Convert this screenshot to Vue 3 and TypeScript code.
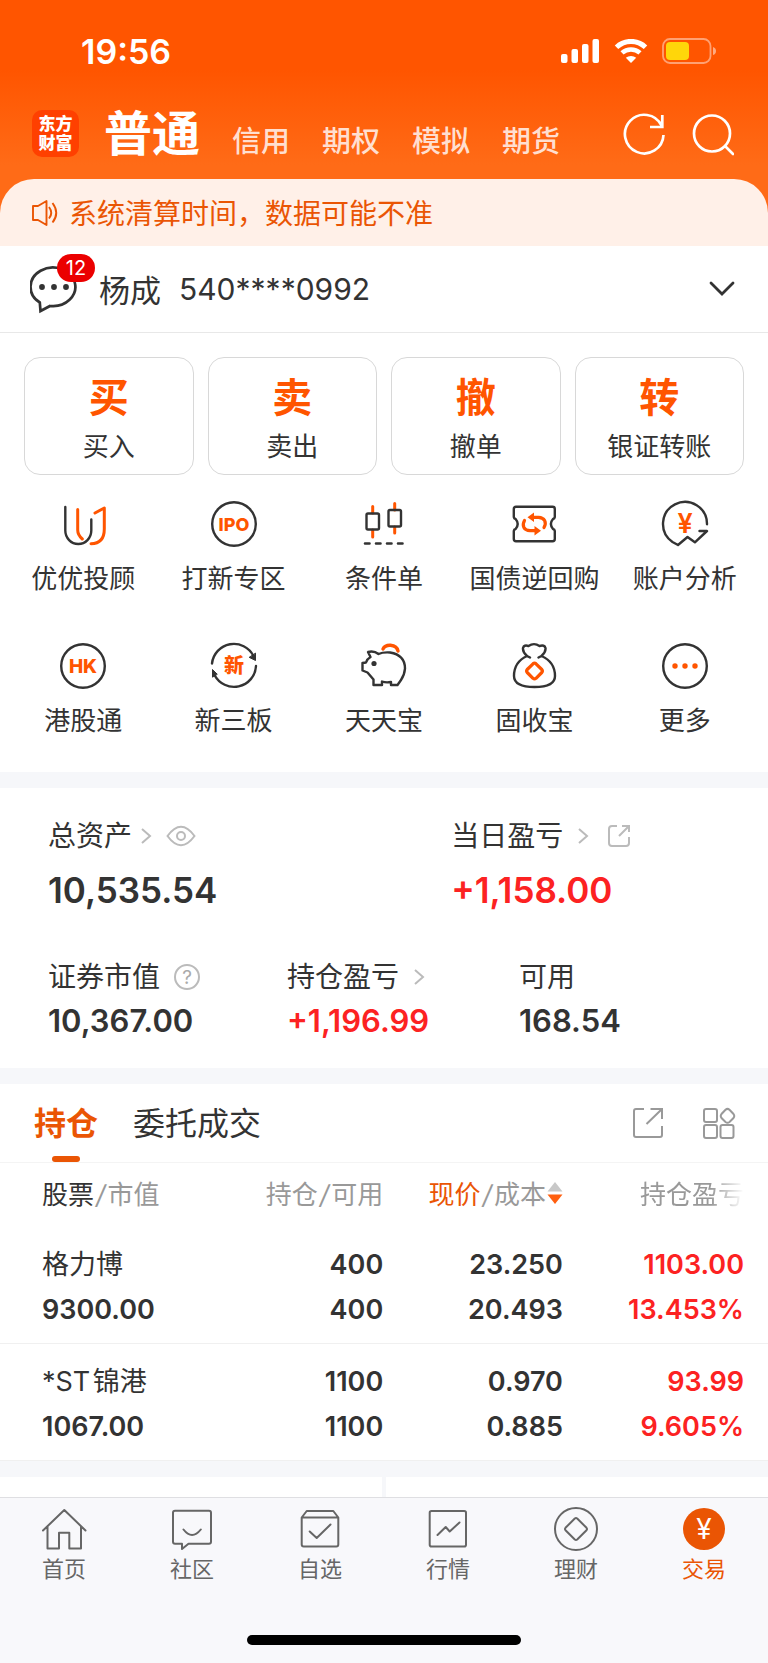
<script setup lang="ts">
interface Action { mark: string; label: string }
interface Holding {
  name: string
  value: string
  held: string
  usable: string
  price: string
  cost: string
  profit: string
  rate: string
}

const markets: string[] = ['信用', '期权', '模拟', '期货']

const actions: Action[] = [
  { mark: '买', label: '买入' },
  { mark: '卖', label: '卖出' },
  { mark: '撤', label: '撤单' },
  { mark: '转', label: '银证转账' },
]

const services: string[] = [
  '优优投顾', '打新专区', '条件单', '国债逆回购', '账户分析',
  '港股通', '新三板', '天天宝', '固收宝', '更多',
]

const holdings: Holding[] = [
  { name: '格力博', value: '9300.00', held: '400', usable: '400', price: '23.250', cost: '20.493', profit: '1103.00', rate: '13.453%' },
  { name: '*ST\u200A锦港', value: '1067.00', held: '1100', usable: '1100', price: '0.970', cost: '0.885', profit: '93.99', rate: '9.605%' },
]

const navItems: string[] = ['首页', '社区', '自选', '行情', '理财', '交易']
</script>

<template>
  <div class="page">
    <header class="top">
      <div class="status">
        <span class="clock">19:56</span>
        <div class="status-icons">
          <svg width="39" height="24" viewBox="0 0 39 24" fill="#fff">
            <rect x="0" y="15" width="6.5" height="9" rx="2" />
            <rect x="10.5" y="10" width="6.5" height="14" rx="2" />
            <rect x="21" y="5" width="6.5" height="19" rx="2" />
            <rect x="31.5" y="0" width="6.5" height="24" rx="2" />
          </svg>
          <svg width="34" height="24" viewBox="0 0 34 24" fill="none" stroke="#fff">
            <path d="M2.5 8.2A21 21 0 0 1 31.500 8.200" stroke-width="5" />
            <path d="M8 13.900A13.500 13.500 0 0 1 26 13.900" stroke-width="4.600" />
            <path d="M17 24L11.800 18.800A8 8 0 0 1 22.200 18.800Z" fill="#fff" stroke="none" />
          </svg>
          <svg width="55" height="26" viewBox="0 0 55 26" fill="none">
            <rect x="1" y="1" width="47.500" height="24" rx="7" stroke="#fff" stroke-opacity=".45" stroke-width="1.800" />
            <rect x="4" y="4" width="23" height="18" rx="4" fill="#ffd60a" />
            <path d="M51 9q3 1 3 4t-3 4z" fill="#fff" fill-opacity=".5" />
          </svg>
        </div>
      </div>
      <div class="title-bar">
        <div class="logo"><span>东方</span><span>财富</span></div>
        <nav class="markets">
          <a href="#" class="current">普通</a>
          <a v-for="m in markets" :key="m" href="#">{{ m }}</a>
        </nav>
        <div class="tools">
          <button type="button" aria-label="刷新">
            <svg width="44" height="44" viewBox="0 0 44 44" fill="none" stroke="#fff" stroke-width="2.700">
              <path d="M41.500 23A19.300 19.300 0 1 1 39.500 13.500M40.300 3V15H28" />
            </svg>
          </button>
          <button type="button" aria-label="搜索">
            <svg width="44" height="44" viewBox="0 0 44 44" fill="none" stroke="#fff" stroke-width="2.700" stroke-linecap="round">
              <circle cx="22" cy="21.500" r="18" /><path d="M35.500 34.500L43 42" />
            </svg>
          </button>
        </div>
      </div>
    </header>

    <div class="notice">
      <svg width="28" height="28" viewBox="0 0 28 28" fill="none" stroke="#ea5504" stroke-width="1.900" stroke-linejoin="round">
        <path d="M2 7H7L15.500 2V26L7 21H2ZM18 8Q22.500 14 18 19.500M21.500 4Q29 14 21.500 23.500" />
      </svg>
      <span>系统清算时间，数据可能不准</span>
    </div>

    <button type="button" class="account">
      <span class="message">
        <svg width="50" height="50" viewBox="0 0 50 50">
          <path d="M9.800 38.500A22.400 19.300 0 1 1 20 42L10.500 47Z" fill="none" stroke="#333" stroke-width="2.700" />
          <g fill="#333"><circle cx="12" cy="23" r="2.900" /><circle cx="24" cy="23" r="2.900" /><circle cx="36" cy="23" r="2.900" /></g>
        </svg>
        <span class="badge">12</span>
      </span>
      <span class="owner">杨成</span>
      <span class="number">540****0992</span>
      <svg class="chevron" width="26" height="16" viewBox="0 0 26 16" fill="none" stroke="#333" stroke-width="2.800" stroke-linecap="round">
        <path d="M2 2L13 13L24 2" />
      </svg>
    </button>

    <section class="actions">
      <button v-for="a in actions" :key="a.label" type="button">
        <strong>{{ a.mark }}</strong>
        <span>{{ a.label }}</span>
      </button>
    </section>

    <section class="services">
      <a v-for="(s, i) in services" :key="s" href="#">
        <svg width="48" height="48" viewBox="0 0 48 48" fill="none" stroke="#333" stroke-width="2.400" stroke-linecap="round" stroke-linejoin="round">
          <template v-if="i === 0">
            <path d="M6.300 7V30.500A13 13.500 0 0 0 32.300 30.500V19.500" />
            <path class="accent" d="M18.700 9.500V30Q18.700 35 23.300 39M36 13L45.300 8V29Q45.300 43.500 32 43.800" stroke-width="3" />
          </template>
          <template v-else-if="i === 1">
            <circle cx="24" cy="24" r="21.800" />
            <text x="24" y="30.500" font-size="18">IPO</text>
          </template>
          <template v-else-if="i === 2">
            <path class="accent" d="M12.700 6.500V13M12.700 30V37M34.700 3.500V10M34.700 27V33" stroke-width="3" />
            <rect x="6.500" y="13.500" width="12.500" height="16" rx="1.500" />
            <rect x="28.500" y="10" width="12.500" height="16.500" rx="1.500" />
            <path d="M5 43.500H9.500M16 43.500H20.500M27 43.500H31.500M38 43.500H42.500" stroke-width="2.600" />
          </template>
          <template v-else-if="i === 3">
            <path d="M6 6.800H42.500Q44.800 6.800 44.800 9V17Q44.600 18.600 43 19Q38.800 24 43 29Q44.600 29.400 44.800 31V39Q44.800 41.200 42.500 41.200H6Q3.800 41.200 3.800 39V31Q4 29.400 5.600 29Q9.800 24 5.600 19Q4 18.600 3.800 17V9Q3.800 6.800 6 6.800Z" />
            <path class="accent" d="M34 27.500C37 22 34.500 17.600 28.500 17.300H23M14.500 20.500C11.500 26 14 30.400 20 30.700H26" stroke-width="3.200" />
            <path d="M17.500 17.300L24 12.500V22ZM31 30.700L24.500 26V35.500Z" fill="#ff5500" stroke="none" />
          </template>
          <template v-else-if="i === 4">
            <path d="M46 24.300A22 22 0 1 0 11.500 42L17 45L26.500 37L33.900 42.300L46 31H38.500" />
            <text x="24" y="32.500" font-size="27" class="yen">¥</text>
          </template>
          <template v-else-if="i === 5">
            <circle cx="24" cy="24" r="21.800" />
            <text x="24" y="30.500" font-size="19">HK</text>
          </template>
          <template v-else-if="i === 6">
            <path d="M2 21.500A22 22 0 0 1 43.500 14M46 24A22 22 0 0 1 4.500 33" />
            <path d="M45.500 11.500V18.500L39.500 15.500ZM2.500 34.800V27.500L7 32Z" fill="#333" stroke-width="1" />
            <text x="24" y="31" font-size="20">新</text>
          </template>
          <template v-else-if="i === 7">
            <path d="M8 10Q14 8.500 18.500 12Q23 10 30 10.500Q45 13 45 26.500Q44.500 33 41 38L37.500 43H31V40Q26 41 22 39.500V43H13.500V37.500L7.500 30.500L2.500 28.500V21L6 20.500Q7 17 10.500 15Z" />
            <circle cx="14" cy="21.500" r="2.600" fill="#333" stroke="none" />
            <path class="accent" d="M23 7Q25 3 30.500 3.300Q37 4 38 9" stroke-width="3.400" />
          </template>
          <template v-else-if="i === 8">
            <path d="M17 14Q12.500 10 13 6Q14 2.500 18.500 4Q24 .2 29.500 4Q34.500 2.500 35.500 6Q36 10 31.500 14Q45 20 45 34Q45 45 24.500 45Q4 45 4 34Q4 20 17 14M28.500 15.500L31.500 14M20 15.500L17 14" />
            <path class="accent" d="M23 21.800Q24.500 20.500 26 21.800L31.800 27.500Q33 29 31.800 30.500L26 36.300Q24.500 37.500 23 36.300L17.200 30.500Q16 29 17.200 27.500Z" stroke-width="3.200" />
          </template>
          <template v-else>
            <circle cx="24" cy="24" r="21.800" />
            <g fill="#ff5500" stroke="none"><circle cx="14" cy="24" r="2.700" /><circle cx="24" cy="24" r="2.700" /><circle cx="34" cy="24" r="2.700" /></g>
          </template>
        </svg>
        <span>{{ s }}</span>
      </a>
    </section>

    <section class="assets">
      <div class="asset-row main">
        <div>
          <h2>总资产
            <svg class="gt" width="12" height="18" viewBox="0 0 12 18"><path d="M2 2L10 9L2 16" /></svg>
            <svg class="mini" width="30" height="22" viewBox="0 0 30 22"><path d="M1.500 11Q15-7.500 28.500 11Q15 29.500 1.500 11Z" /><circle cx="15" cy="11" r="4" /></svg>
          </h2>
          <p>10,535.54</p>
        </div>
        <div>
          <h2>当日盈亏
            <svg class="gt far" width="12" height="18" viewBox="0 0 12 18"><path d="M2 2L10 9L2 16" /></svg>
            <svg class="mini wide" width="24" height="24" viewBox="0 0 24 24"><path d="M10 2H5Q2 2 2 5V19Q2 22 5 22H19Q22 22 22 19V13M15 2H22V8M22 2L12 12" /></svg>
          </h2>
          <p class="up">+1,158.00</p>
        </div>
      </div>
      <div class="asset-row sub">
        <div>
          <h2>证券市值
            <svg class="help" width="26" height="26" viewBox="0 0 26 26"><circle cx="13" cy="13" r="12" /><text x="13" y="20">?</text></svg>
          </h2>
          <p>10,367.00</p>
        </div>
        <div>
          <h2>持仓盈亏
            <svg class="gt far" width="12" height="18" viewBox="0 0 12 18"><path d="M2 2L10 9L2 16" /></svg>
          </h2>
          <p class="up">+1,196.99</p>
        </div>
        <div>
          <h2>可用</h2>
          <p>168.54</p>
        </div>
      </div>
    </section>

    <section class="positions">
      <div class="tabs">
        <button type="button" class="active">持仓</button>
        <button type="button">委托成交</button>
        <div class="tab-tools">
          <button type="button" aria-label="分享">
            <svg width="32" height="32" viewBox="0 0 32 32"><path d="M12 2H4Q2 2 2 4V28Q2 30 4 30H28Q30 30 30 28V19M18.500 2H30V12M30 2L14.500 17" /></svg>
          </button>
          <button type="button" aria-label="布局">
            <svg width="34" height="32" viewBox="0 0 34 32">
              <rect x="2" y="2" width="13" height="13" rx="2" /><rect x="2" y="18" width="13" height="13" rx="2" /><rect x="18.500" y="18" width="13" height="13" rx="2" />
              <path d="M23.500 2.700Q25.500 1 27.500 2.700L31.500 7Q33 9 31.500 11L27.500 15Q25.500 16.500 23.500 15L19.500 11Q18 9 19.500 7Z" />
            </svg>
          </button>
        </div>
      </div>
      <table>
        <thead>
          <tr>
            <th><b>股票</b><i>/</i>市值</th>
            <th>持仓<i>/</i>可用</th>
            <th>
              <span class="sort"><span><em>现价</em><i>/</i>成本</span>
                <svg width="16" height="22" viewBox="0 0 16 22"><path d="M8 0L15.500 9.500H.5Z" fill="#c8c8c8" /><path d="M8 22L15.500 12.500H.5Z" fill="#ff5f0f" /></svg>
              </span>
            </th>
            <th><span class="fade">持仓盈亏</span></th>
          </tr>
        </thead>
        <tbody>
          <tr v-for="h in holdings" :key="h.name">
            <td><span class="name">{{ h.name }}</span><span>{{ h.value }}</span></td>
            <td><span>{{ h.held }}</span><span>{{ h.usable }}</span></td>
            <td><span>{{ h.price }}</span><span>{{ h.cost }}</span></td>
            <td class="up"><span>{{ h.profit }}</span><span>{{ h.rate }}</span></td>
          </tr>
        </tbody>
      </table>
    </section>

    <div class="peek"><div></div><div></div></div>

    <footer class="bottom">
      <nav>
        <a v-for="(n, i) in navItems" :key="n" href="#" :class="{ on: i === 5 }">
          <svg width="48" height="48" viewBox="0 0 48 48" fill="none" stroke="#666" stroke-width="2" stroke-linejoin="round" stroke-linecap="round">
            <path v-if="i === 0" d="M3 25.500L24.300 5L45.500 25.500M7.500 21.500V43.500H19V27.700H29.300V43.500H41V21.500" />
            <path v-else-if="i === 1" d="M7 5.700H41Q43 5.700 43 7.700V36.700Q43 38.700 41 38.700H20.500L14 44V38.700H7Q5 38.700 5 36.700V7.700Q5 5.700 7 5.700ZM15.500 24.500Q24 35.500 32.800 24.500" />
            <path v-else-if="i === 2" d="M5.700 12.500L10.700 6H37.300L42.300 12.500V39.500Q42.300 41.500 40.300 41.500H7.700Q5.700 41.500 5.700 39.500ZM5.700 12.500H42.300M13.700 26.500L20.700 33L34.500 19.500" />
            <path v-else-if="i === 3" d="M7.500 6H40.200Q42 6 42 7.800V39.700Q42 41.500 40.200 41.500H7.500Q5.700 41.500 5.700 39.700V7.800Q5.700 6 7.500 6ZM13.500 30L21.700 22L25.700 26.500L35.500 17.500" />
            <g v-else-if="i === 4"><circle cx="24" cy="24" r="21" /><path d="M22.800 13.500Q24 12.500 25.200 13.500L34.500 22.800Q35.500 24 34.500 25.200L25.200 34.500Q24 35.500 22.800 34.500L13.500 25.200Q12.500 24 13.500 22.800Z" /></g>
            <g v-else stroke="none"><circle cx="24" cy="24" r="21" fill="#ea5504" /><text x="24" y="34">¥</text></g>
          </svg>
          <span>{{ n }}</span>
        </a>
      </nav>
      <div class="home-bar"></div>
    </footer>
  </div>
</template>

<style>
body { margin: 0; background: #f8f8fb; }
</style>

<style scoped>
.page {
  font-family: Inter, "Noto Sans CJK SC", sans-serif;
  color: #333;
  background: #fff;
  font-weight: 400;
}
button {
  font: inherit;
  color: inherit;
  background: none;
  border: 0;
  padding: 0;
  margin: 0;
}
a { color: inherit; text-decoration: none; }
svg { display: block; flex: none; }
h2, p { margin: 0; }

.top {
  background: linear-gradient(#ff5500 0, #ff5500 70px, #ff6b17 165px);
  color: #fff;
  padding-bottom: 40px;
  margin-bottom: -40px;
}
.status {
  display: flex;
  align-items: center;
  justify-content: space-between;
  height: 74px;
  padding: 14px 51px 0 81px;
}
.clock { font-size: 34px; font-weight: 600; }
.status-icons { display: flex; align-items: center; gap: 14px; }
.title-bar { display: flex; align-items: center; height: 91px; padding: 0 34px 0 32px; }
.logo {
  display: flex;
  flex-direction: column;
  align-items: center;
  justify-content: center;
  width: 47px;
  height: 47px;
  border-radius: 10px;
  background: #ff4000;
  font-size: 17px;
  line-height: 19px;
  font-weight: 900;
}
.markets { display: flex; align-items: flex-end; gap: 32px; margin-left: 25px; font-size: 29px; line-height: 48px; font-weight: 500; }
.markets a { color: #ffdfd0; }
.markets .current { color: #fff; font-size: 48px; line-height: 64px; font-weight: 700; }
.tools { display: flex; gap: 24px; margin-left: auto; }

.notice {
  display: flex;
  align-items: center;
  gap: 10px;
  height: 67px;
  padding: 0 31px;
  border-radius: 34px 34px 0 0;
  background: #fff0e8;
  color: #ea5504;
  font-size: 28px;
}
.notice span, .owner { padding-bottom: 2px; }

.account {
  display: flex;
  align-items: center;
  width: 100%;
  height: 87px;
  padding: 0 33px 0 30px;
  border-bottom: 1px solid #e8e8e8;
  font-size: 31px;
}
.message { position: relative; margin-right: 19px; }
.badge {
  position: absolute;
  left: 27px;
  top: -10px;
  width: 38px;
  border-radius: 14px;
  background: #eb0000;
  color: #fff;
  font-size: 20px;
  line-height: 28px;
}
.number { margin-left: 18px; font-size: 30px; }
.chevron { margin-left: auto; }

.actions { display: grid; grid-template-columns: repeat(4, 1fr); gap: 14px; padding: 24px 24px 0; }
.actions button {
  display: flex;
  flex-direction: column;
  align-items: center;
  height: 118px;
  padding-top: 13px;
  border: 1px solid #d8d8d8;
  border-radius: 16px;
}
.actions strong { font-size: 40px; line-height: 54px; font-weight: 700; color: #ff5500; }
.actions span { font-size: 26px; line-height: 44px; }

.services { display: grid; grid-template-columns: repeat(5, 1fr); row-gap: 45px; padding: 25px 8px 33px; }
.services a { display: flex; flex-direction: column; align-items: center; gap: 13px; font-size: 26px; line-height: 36px; white-space: nowrap; }
.services .accent { stroke: #ff5500; }
.services text { fill: #ff5500; stroke: none; text-anchor: middle; font-weight: 800; }
.services .yen { font-weight: 600; }

.assets { border-top: 16px solid #f6f7fa; border-bottom: 16px solid #f6f7fa; padding: 28px 0 27px 48px; }
.asset-row { display: grid; }
.asset-row.main { grid-template-columns: 56% 44%; margin-bottom: 45px; }
.asset-row.sub { grid-template-columns: 239fr 232fr 249fr; }
.assets h2 { display: flex; align-items: center; font-size: 28px; line-height: 40px; height: 40px; font-weight: 400; }
.assets p { font-size: 31px; line-height: 40px; margin-top: 4px; font-weight: 600; }
.assets .main p { font-size: 35px; line-height: 44px; margin-top: 12px; }
.up { color: #fc2222; }
.assets svg { fill: none; stroke: #bbb; stroke-width: 2; }
.gt { margin-left: 8px; }
.gt.far { margin-left: 14px; }
.mini { margin-left: 14px; }
.mini.wide { margin-left: 18px; }
.help { margin-left: 14px; }
.assets .help text { fill: #aaa; stroke: none; font-size: 19px; text-anchor: middle; }

.tabs { display: flex; align-items: center; height: 78px; padding: 0 32px 0 34px; border-bottom: 1px solid #f4f4f4; font-size: 32px; }
.tabs > button { position: relative; height: 78px; padding-bottom: 4px; margin-right: 35px; }
.tabs .active { color: #ea5504; font-weight: 700; }
.active::after {
  content: "";
  position: absolute;
  left: 50%;
  bottom: 0;
  width: 28px;
  height: 6px;
  margin-left: -14px;
  border-radius: 3px;
  background: #ea5504;
}
.tab-tools { display: flex; gap: 38px; margin-left: auto; }
.tab-tools svg { fill: none; stroke: #999; stroke-width: 2; }

table { width: 100%; border-collapse: collapse; table-layout: fixed; }
th { box-sizing: border-box; width: 23.4%; height: 64px; padding: 0 0 5px; font-size: 26px; font-weight: 400; color: #999; text-align: right; white-space: nowrap; }
th:first-child { width: 26.5%; }
th:last-child { width: 26.7%; }
th:first-child, td:first-child { text-align: left; padding-left: 42px; }
th:last-child, td:last-child { padding-right: 24px; }
th b { font-weight: 400; color: #333; }
th em { font-style: normal; color: #ea5504; }
th i { margin: 0 2px; }
.sort { display: flex; align-items: center; justify-content: flex-end; gap: 1px; }
.fade { -webkit-mask-image: linear-gradient(90deg, #000 68%, transparent); mask-image: linear-gradient(90deg, #000 68%, transparent); }
td { padding: 15px 0 11px; font-size: 27px; line-height: 45px; font-weight: 600; text-align: right; }
td span { display: block; height: 45px; }
td .name { font-weight: 400; }
tbody tr { border-bottom: 1px solid #f0f0f0; }

.peek { display: grid; grid-template-columns: 1fr 1fr; gap: 4px; padding-top: 16px; background: #f6f7fa; }
.peek div { height: 20px; background: #fff; }

.bottom { border-top: 1px solid #dfdfe2; background: #f8f8fb; padding: 7px 0 17px; }
.bottom nav { display: grid; grid-template-columns: repeat(6, 1fr); }
.bottom a { display: flex; flex-direction: column; align-items: center; gap: 2px; font-size: 22px; line-height: 28px; padding-bottom: 2px; color: #666; }
.bottom .on { color: #ea5504; }
.bottom text { fill: #fff; font-size: 28px; font-weight: 400; text-anchor: middle; }
.home-bar { width: 274px; height: 10px; margin: 50px auto 0; border-radius: 5px; background: #000; }
</style>
